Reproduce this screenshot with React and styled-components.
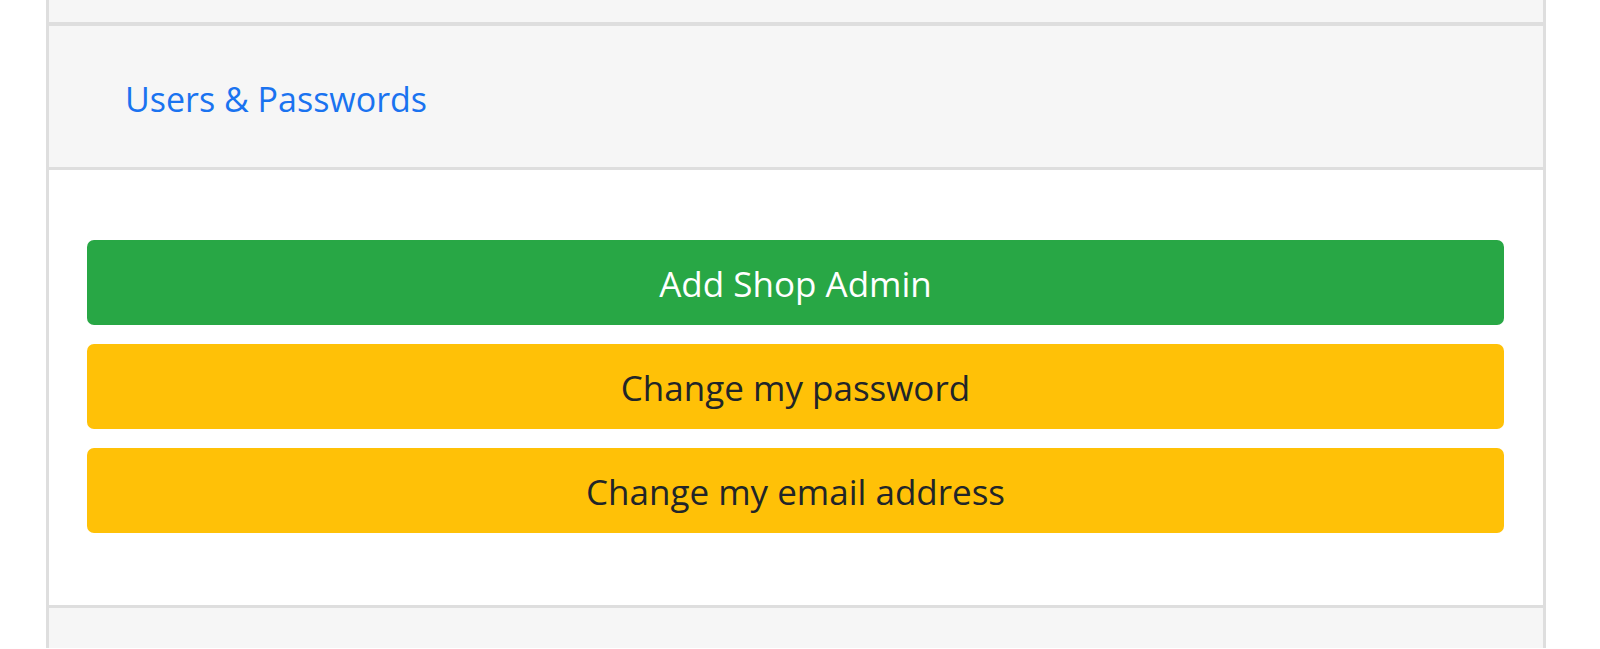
import React from "react";
import styled, { createGlobalStyle } from "styled-components";

const GlobalStyle = createGlobalStyle`
  html, body {
    margin: 0;
    padding: 0;
    background: #ffffff;
    font-family: "Open Sans", "Noto Sans", Arial, sans-serif;
  }
`;

const Page = styled.div`
  width: 1600px;
  height: 649px;
  overflow: hidden;
  padding-left: 46px;
  box-sizing: border-box;
`;

const Card = styled.div`
  width: 1500px;
  border-left: 3px solid #dedede;
  border-right: 3px solid #dedede;
  box-sizing: border-box;
  display: flex;
  flex-direction: column;
`;

const Strip = styled.div`
  height: ${(p) => p.h}px;
  background: #f6f6f6;
  border-top: ${(p) => (p.top ? "3px solid #dedede" : "none")};
  border-bottom: ${(p) => (p.bottom ? "4px solid #dedede" : "none")};
`;

const Header = styled.div`
  height: 137px;
  padding: 4px 0 0 76px;
  background: #f6f6f6;
  border-bottom: 3px solid #dedede;
  display: flex;
  align-items: center;
`;

const HeaderLink = styled.a`
  color: #1a73f0;
  font-size: 34px;
  text-decoration: none;
  cursor: pointer;
`;

const Body = styled.div`
  padding: 70px 39px 72px 38px;
  display: flex;
  flex-direction: column;
  gap: 19px;
`;

const Button = styled.button`
  height: 85px;
  width: 100%;
  border: none;
  border-radius: 7px;
  font-family: inherit;
  font-size: 35px;
  cursor: pointer;
  padding-top: 2px;
  background: ${(p) => (p.variant === "success" ? "#28a745" : "#ffc107")};
  color: ${(p) => (p.variant === "success" ? "#ffffff" : "#212529")};
`;

export default function App() {
  return (
    <>
      <GlobalStyle />
      <Page>
        <Card>
          <Strip h={22} bottom />
          <Header>
            <HeaderLink>Users &amp; Passwords</HeaderLink>
          </Header>
          <Body>
            <Button variant="success">Add Shop Admin</Button>
            <Button variant="warning">Change my password</Button>
            <Button variant="warning">Change my email address</Button>
          </Body>
          <Strip h={40} top />
        </Card>
      </Page>
    </>
  );
}
